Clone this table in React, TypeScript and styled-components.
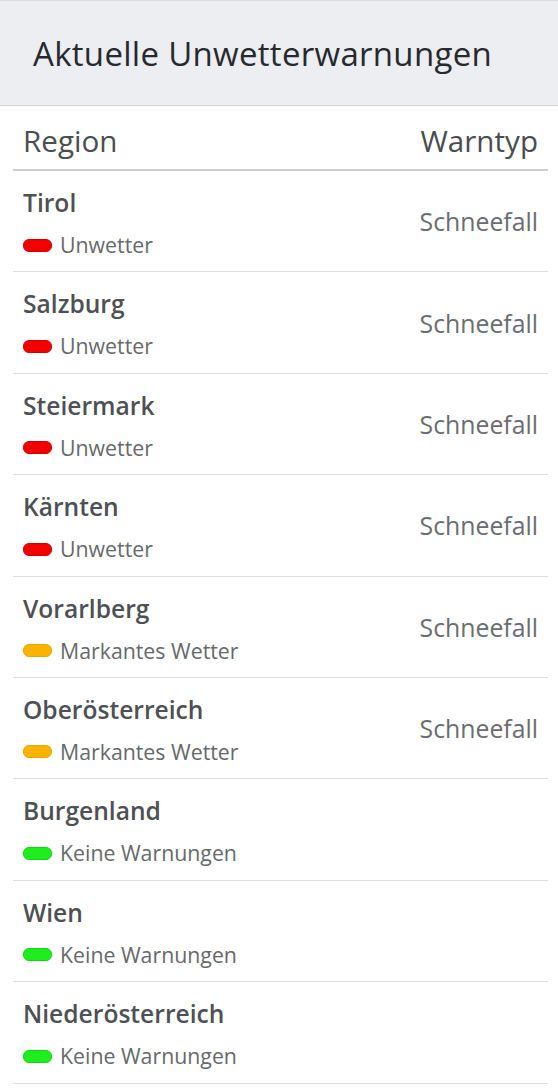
import React from "react";
import styled, { createGlobalStyle } from "styled-components";

const Global = createGlobalStyle`
  html, body { margin: 0; padding: 0; background: #ffffff; }
  body { font-family: "Open Sans", "Noto Sans", sans-serif; }
`;

const Panel = styled.section`
  width: 558px;
  background: #ffffff;
`;

const Header = styled.header`
  background: #eceef1;
  border-top: 1px solid #d9dbde;
  border-bottom: 1px solid #d6d8db;
  height: 104px;
  display: flex;
  align-items: center;
  padding: 0 33px;
  box-sizing: content-box;
`;

const Title = styled.h2`
  margin: 0;
  font-size: 33px;
  font-weight: 400;
  color: #262a2e;
  letter-spacing: 0.3px;
  line-height: 40px;
  margin-top: 2px;
`;

const Table = styled.table`
  margin: 0 10px 0 13px;
  width: 535px;
  border-collapse: collapse;
`;

const HeadCell = styled.th<{ $align?: "left" | "right" }>`
  text-align: ${(p) => p.$align || "left"};
  font-size: 29.6px;
  font-weight: 400;
  color: #4a4d50;
  height: 64px;
  padding: 6px 10px 0;
  border-bottom: 2px solid #cbcdd0;
  vertical-align: middle;
  box-sizing: border-box;
`;

const Row = styled.tr`
  border-bottom: 1px solid #dcdee0;
`;

const RegionCell = styled.td`
  padding: 17px 10px 11.4px;
  vertical-align: top;
`;

const TypeCell = styled.td`
  padding: 0 10px;
  text-align: right;
  vertical-align: middle;
  font-size: 24.8px;
  color: #6a6d70;
`;

const Name = styled.div`
  font-size: 24.6px;
  font-weight: 600;
  line-height: 30px;
  color: #4d5054;
`;

const Status = styled.div`
  margin-top: 12px;
  display: flex;
  align-items: center;
  gap: 8px;
  line-height: 30px;
  font-size: 21.3px;
  color: #66696c;
`;

const Pill = styled.span<{ $color: string; $edge: string }>`
  display: inline-block;
  flex: none;
  width: 27px;
  height: 11px;
  border-radius: 6px;
  background: ${(p) => p.$color};
  border: 1px solid ${(p) => p.$edge};
`;

type Level = "red" | "orange" | "green";

const levels: Record<Level, { color: string; edge: string; label: string }> = {
  red: { color: "#f20000", edge: "#d20000", label: "Unwetter" },
  orange: { color: "#f9b300", edge: "#e8a800", label: "Markantes Wetter" },
  green: { color: "#1eee1e", edge: "#12d412", label: "Keine Warnungen" },
};

const data: { name: string; level: Level; type?: string }[] = [
  { name: "Tirol", level: "red", type: "Schneefall" },
  { name: "Salzburg", level: "red", type: "Schneefall" },
  { name: "Steiermark", level: "red", type: "Schneefall" },
  { name: "Kärnten", level: "red", type: "Schneefall" },
  { name: "Vorarlberg", level: "orange", type: "Schneefall" },
  { name: "Oberösterreich", level: "orange", type: "Schneefall" },
  { name: "Burgenland", level: "green" },
  { name: "Wien", level: "green" },
  { name: "Niederösterreich", level: "green" },
];

export default function App() {
  return (
    <>
      <Global />
      <Panel>
        <Header>
          <Title>Aktuelle Unwetterwarnungen</Title>
        </Header>
        <Table>
          <thead>
            <tr>
              <HeadCell>Region</HeadCell>
              <HeadCell $align="right">Warntyp</HeadCell>
            </tr>
          </thead>
          <tbody>
            {data.map((r) => {
              const l = levels[r.level];
              return (
                <Row key={r.name}>
                  <RegionCell>
                    <Name>{r.name}</Name>
                    <Status>
                      <Pill $color={l.color} $edge={l.edge} />
                      {l.label}
                    </Status>
                  </RegionCell>
                  <TypeCell>{r.type || ""}</TypeCell>
                </Row>
              );
            })}
          </tbody>
        </Table>
      </Panel>
    </>
  );
}
